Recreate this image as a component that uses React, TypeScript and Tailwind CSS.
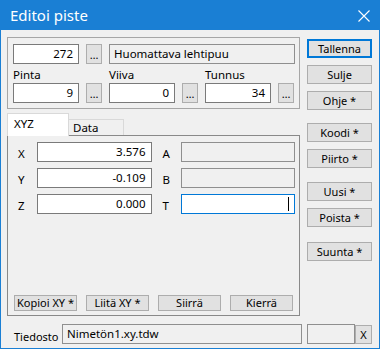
import React from "react";

const F = "font-['Noto_Sans',sans-serif]";

function Field({ value = "", w, align = "right", disabled = false, focused = false, cursor = false }: { value?: string; w: number; align?: "left" | "right"; disabled?: boolean; focused?: boolean; cursor?: boolean }) {
  const border = focused ? "border-[#0078d7]" : disabled ? "border-[#8f8f8f]" : "border-[#7a7a7a]";
  const bg = disabled ? "bg-[#f0f0f0]" : "bg-white";
  return (
    <div
      className={`relative h-[20px] shrink-0 border ${border} ${bg} flex items-center whitespace-nowrap ${align === "right" ? "justify-end pr-[5px]" : "justify-start pl-[4px]"} text-[11.5px] leading-[18px] text-black`}
      style={{ width: w }}
    >
      {value}
      {cursor && <div className="absolute right-[5px] top-[2px] h-[14px] w-[1px] bg-black" />}
    </div>
  );
}

function Dots() {
  return (
    <div className="h-[20px] w-[16px] shrink-0 border border-[#adadad] bg-[#e1e1e1] flex items-end justify-center text-[11px] leading-[16px] text-black">
      …
    </div>
  );
}

function Btn({ label, w = 65, h = 19, primary = false, cls = "" }: { label: string; w?: number; h?: number; primary?: boolean; cls?: string }) {
  return (
    <div
      className={`shrink-0 ${primary ? "border-2 border-[#0078d7]" : "border border-[#adadad]"} bg-[#e1e1e1] flex items-center justify-center whitespace-nowrap text-[11px] leading-[14px] text-black ${cls}`}
      style={{ width: w, height: h }}
    >
      {label}
    </div>
  );
}

export default function App() {
  return (
    <div className={`${F} w-[380px] h-[349px] bg-[#f0f0f0] border border-t-0 border-[#1a7fd4] flex flex-col overflow-hidden`}>
      {/* title bar */}
      <div className="h-[30px] -mx-[1px] bg-[#1a7fd4] flex items-center justify-between pl-[10px] pr-[10px] shrink-0">
        <span className="text-white text-[15px] leading-[20px]">Editoi piste</span>
        <svg width="12" height="12" viewBox="0 0 12 12" className="mt-[1px]">
          <path d="M0.5 0.5 L11.5 11.5 M11.5 0.5 L0.5 11.5" stroke="white" strokeWidth="1.1" />
        </svg>
      </div>

      {/* main */}
      <div className="flex pl-[6px] pt-[7px]">
        {/* left column */}
        <div className="w-[293px] flex flex-col">
          {/* group box */}
          <div className="h-[72px] border border-[#a6a6a6] pl-[5px] pt-[6px]">
            <div className="flex gap-[7px]">
              <Field value="272" w={66} />
              <Dots />
              <Field value="Huomattava lehtipuu" w={186} align="left" disabled />
            </div>
            <div className="flex gap-[7px]">
              {[
                ["Pinta", "9"],
                ["Viiva", "0"],
                ["Tunnus", "34"],
              ].map(([l, v]) => (
                <div key={l} className="flex flex-col w-[89px]">
                  <div className="h-[19px] pt-[3px] text-[11.5px] leading-[15px] text-black">{l}</div>
                  <div className="flex gap-[7px]">
                    <Field value={v} w={66} />
                    <Dots />
                  </div>
                </div>
              ))}
            </div>
          </div>

          {/* tabs */}
          <div className="mt-[4px] flex items-end h-[22px] relative z-10">
            <div className="w-[62px] h-[23px] -mb-[1px] bg-white border border-b-0 border-[#d9d9d9] pl-[6px] pt-[2px] text-[11.5px] leading-[15px] text-black">
              XYZ
            </div>
            <div className="w-[55px] h-[16px] border border-b-0 border-l-0 border-[#d9d9d9] bg-[#f0f0f0] pl-[4px] text-[11.5px] leading-[15px] text-black">
              Data
            </div>
          </div>
          <div className="h-[181px] border border-[#898989] flex flex-col pt-[6px] pr-[4px] pb-[4px]">
            <div className="flex flex-col gap-[6px]">
              {[
                ["X", "3.576", "A"],
                ["Y", "-0.109", "B"],
                ["Z", "0.000", "T"],
              ].map(([l, v, r], i) => (
                <div key={l} className="flex items-center">
                  <div className="w-[29px] pl-[10px] pt-[2px] text-[11.5px] leading-[15px] text-black">{l}</div>
                  <Field value={v} w={115} />
                  <div className="w-[30px] pl-[11px] pt-[3px] text-[11.5px] leading-[15px] text-black">{r}</div>
                  <Field w={114} align="left" disabled={i < 2} focused={i === 2} cursor={i === 2} />
                </div>
              ))}
            </div>
            <div className="mt-auto flex pl-[6px] gap-[9px]">
              <Btn label="Kopioi XY *" w={63} h={16} />
              <Btn label="Liitä XY *" w={63} h={16} />
              <Btn label="Siirrä" w={63} h={16} />
              <Btn label="Kierrä" w={63} h={16} />
            </div>
          </div>
        </div>

        {/* right column */}
        <div className="ml-[7px] flex flex-col pt-[2px]">
          <Btn label="Tallenna" primary />
          <Btn label="Sulje" cls="mt-[7px]" />
          <Btn label="Ohje *" cls="mt-[7px]" />
          <Btn label="Koodi *" cls="mt-[13px]" />
          <Btn label="Piirto *" cls="mt-[7px]" />
          <Btn label="Uusi *" cls="mt-[14px]" />
          <Btn label="Poista *" cls="mt-[7px]" />
          <Btn label="Suunta *" cls="mt-[15px]" />
        </div>
      </div>

      {/* bottom row */}
      <div className="flex items-end pl-[13px] mt-[8px]">
        <div className="w-[48px] pb-[0px] whitespace-nowrap text-[11px] leading-[15px] text-black">Tiedosto</div>
        <Field value="Nimetön1.xy.tdw" w={240} align="left" disabled />
        <div className="ml-[5px]">
          <Field w={48} disabled />
        </div>
        <Btn label="X" w={17} h={19} />
      </div>
    </div>
  );
}
